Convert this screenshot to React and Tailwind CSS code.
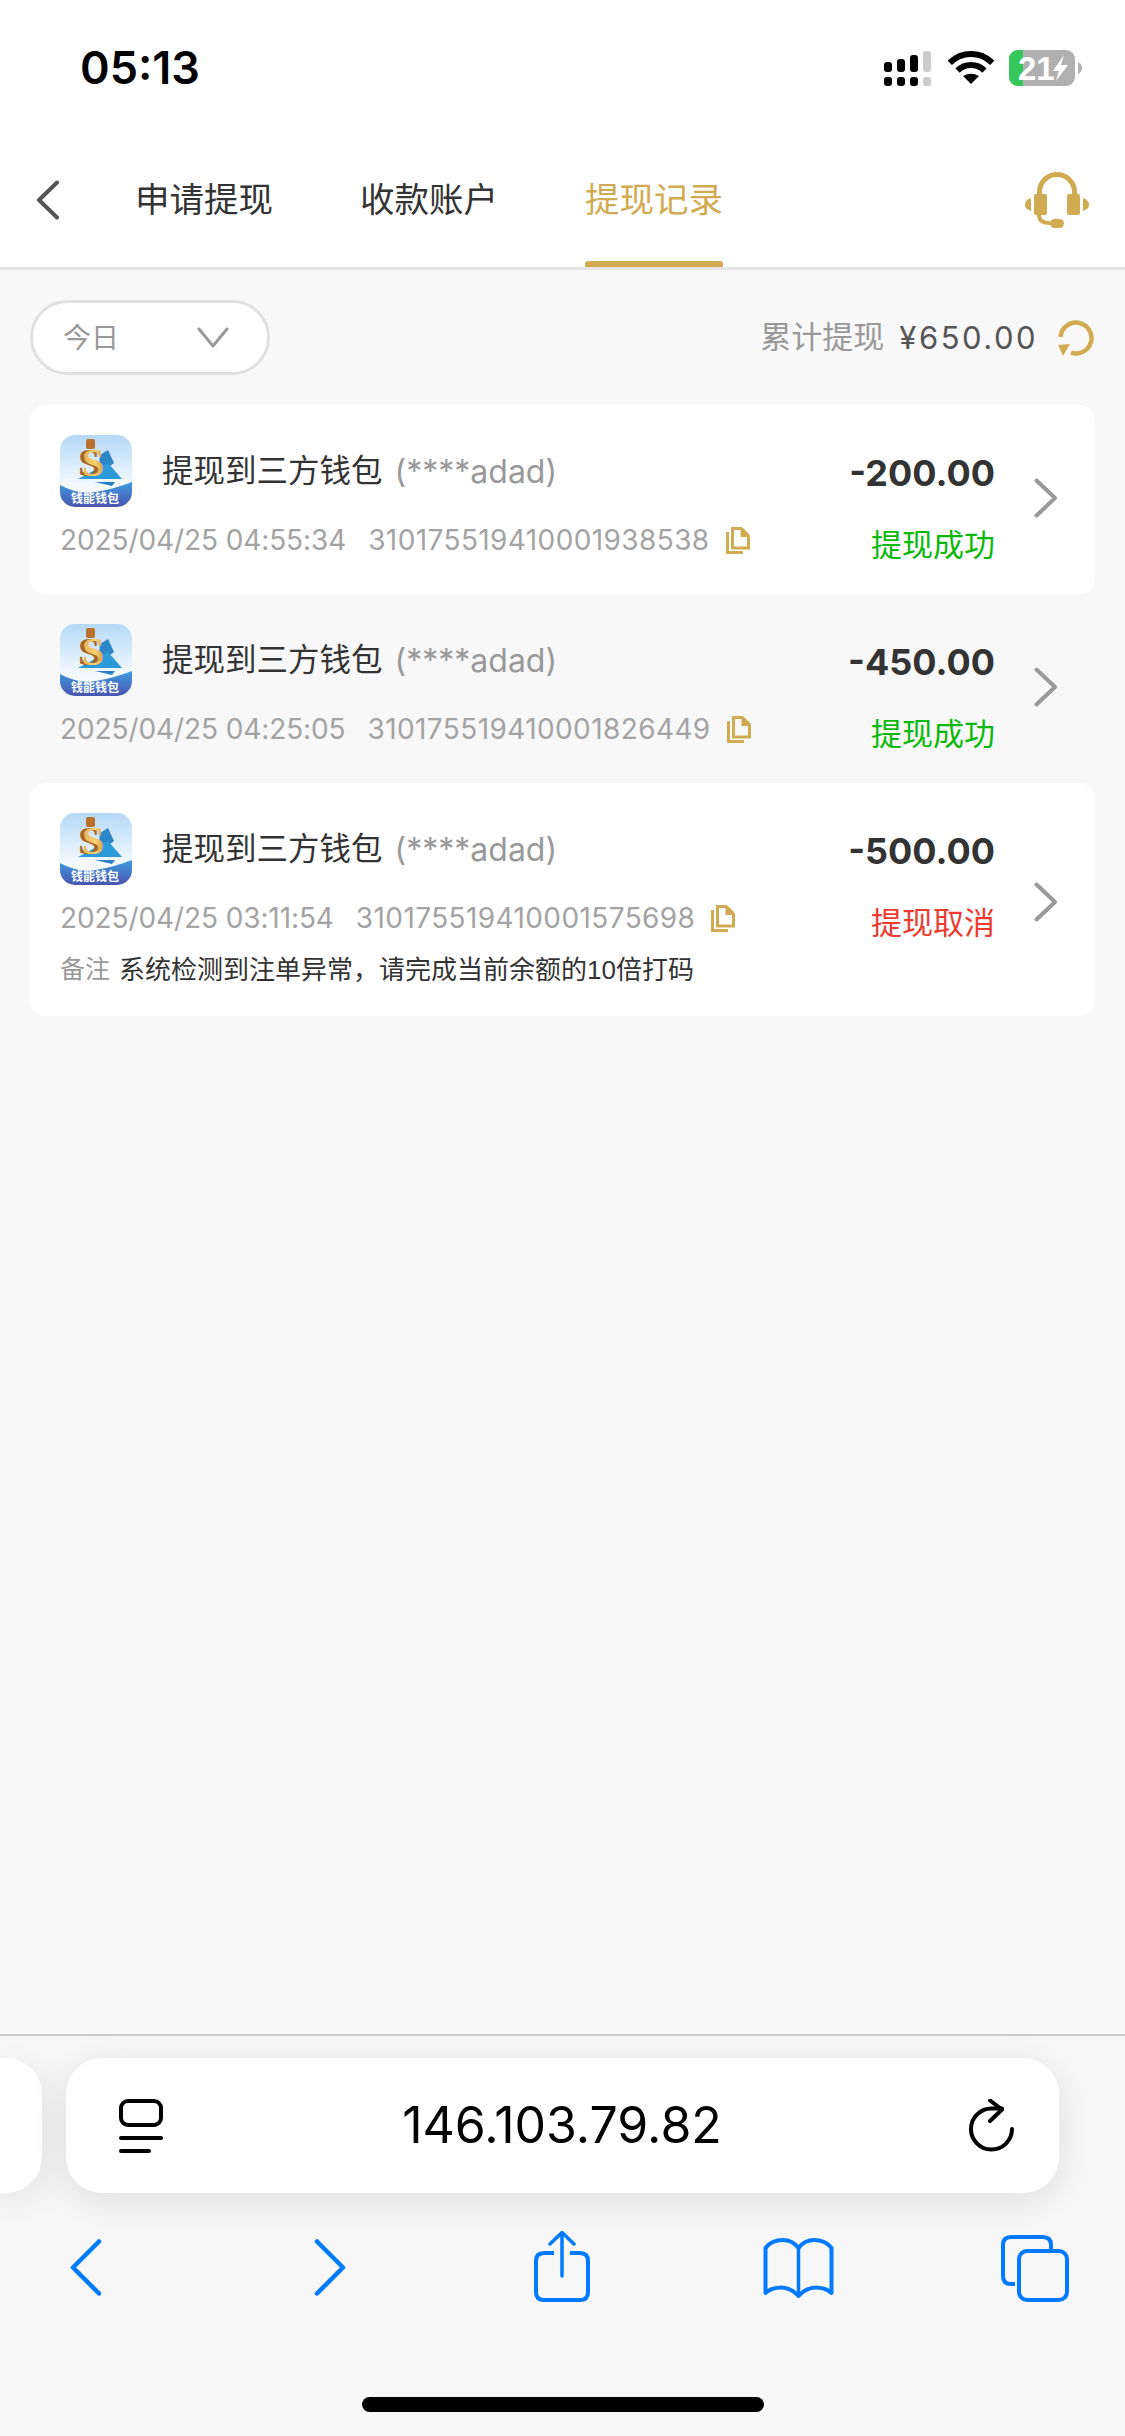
const CJK = "font-['Liberation_Sans','Noto_Sans_CJK_SC',sans-serif]"

const records = [
  { amount: '-200.00', date: '2025/04/25 04:55:34', no: '310175519410001938538', status: '提现成功', color: 'text-[#0cb80c]', white: true },
  { amount: '-450.00', date: '2025/04/25 04:25:05', no: '310175519410001826449', status: '提现成功', color: 'text-[#0cb80c]', white: false },
  { amount: '-500.00', date: '2025/04/25 03:11:54', no: '310175519410001575698', status: '提现取消', color: 'text-[#ee3b30]', white: true, note: '系统检测到注单异常，请完成当前余额的10倍打码' },
]

function WalletLogo({ id }) {
  return (
    <svg width="72" height="72" viewBox="0 0 72 72" className="shrink-0">
      <defs>
        <linearGradient id={`sky${id}`} x1="0" y1="0" x2="0" y2="1">
          <stop offset="0" stopColor="#b5d9f7" />
          <stop offset="0.7" stopColor="#f4f9fe" />
        </linearGradient>
        <linearGradient id={`sea${id}`} x1="0" y1="0" x2="0" y2="1">
          <stop offset="0" stopColor="#3f9be0" />
          <stop offset="1" stopColor="#4a55b0" />
        </linearGradient>
        <linearGradient id={`gold${id}`} x1="0" y1="0" x2="1" y2="0">
          <stop offset="0" stopColor="#e8b050" />
          <stop offset="0.6" stopColor="#f6d070" />
          <stop offset="1" stopColor="#d89a3a" />
        </linearGradient>
        <clipPath id={`clip${id}`}>
          <rect width="72" height="72" rx="15" />
        </clipPath>
      </defs>
      <g clipPath={`url(#clip${id})`}>
        <rect width="72" height="72" fill={`url(#sky${id})`} />
        <path d="M40 20 L48 15 L54 28 L38 40 Z" fill="#2b86c8" />
        <path d="M18 44 L48 28 L62 44 Z" fill="#2a9ad8" />
        <path d="M35 47 L55 47 L52 51 Z" fill="#2a7fc4" />
        <rect x="26" y="4" width="9" height="10" rx="2" fill="#b8702c" />
        <text x="29" y="41" textAnchor="middle" fontSize="40" fontWeight="700" fill="#a8642a" fontFamily="Liberation Serif, serif">S</text>
        <text x="33" y="41" textAnchor="middle" fontSize="40" fontWeight="700" fill={`url(#gold${id})`} fontFamily="Liberation Serif, serif">S</text>
        <path d="M0 50 Q18 60 36 57 Q54 54 72 47 V72 H0 Z" fill={`url(#sea${id})`} />
        <text x="35" y="68" textAnchor="middle" fontSize="12" fontWeight="700" fill="#ffffff" fontFamily="Noto Sans CJK SC, sans-serif">钱能钱包</text>
      </g>
    </svg>
  )
}

function CopyIcon() {
  return (
    <svg width="24" height="27" viewBox="0 0 24 27" fill="none" className="shrink-0">
      <path d="M1.5 5 V25.5 H17" stroke="#d1ab52" strokeWidth="3" />
      <path d="M6.5 1.5 H15 L22.5 9 V21 H6.5 Z" stroke="#d1ab52" strokeWidth="3" />
      <path d="M14.5 1 H17 L23 7 V10 H14.5 Z" fill="#d1ab52" />
    </svg>
  )
}

function RecordCard({ item, index }) {
  return (
    <div className={`flex items-center rounded-2xl pl-[30px] pr-[37px] ${item.white ? 'bg-white' : ''} ${item.note ? 'pt-[30px] pb-[26px]' : 'pt-[30px] pb-[34px]'}`}>
      <div className="flex-1 min-w-0 self-start">
        <div className="flex items-center h-[72px]">
          <WalletLogo id={index} />
          <span className="ml-[30px] pt-[2px] text-[31.5px] text-[#333]">提现到三方钱包</span>
          <span className="ml-[12px] pt-[2px] font-['Inter',sans-serif] text-[32px] text-[#999]">(****adad)</span>
        </div>
        <div className="flex items-center h-[40px] mt-[13px] font-['Inter',sans-serif] text-[28px] text-[#a3a3a3]">
          <span className="tracking-[-0.1px]">{item.date}</span>
          <span className="ml-[22px] tracking-[0.4px]">{item.no}</span>
          <span className="ml-[16px]"><CopyIcon /></span>
        </div>
        {item.note && (
          <div className="flex items-center h-[40px] mt-3">
            <span className="text-[25px] text-[#999]">备注</span>
            <span className="ml-[9px] text-[26px] text-[#333]">{item.note}</span>
          </div>
        )}
      </div>
      <div className="self-start text-right">
        <div className="flex items-center justify-end h-[72px] pt-[3px] font-['Inter',sans-serif] font-bold text-[36px] text-[#333]">{item.amount}</div>
        <div className={`h-[40px] mt-[13px] leading-[52px] text-[31px] ${item.color}`}>{item.status}</div>
      </div>
      <svg width="24" height="40" viewBox="0 0 24 40" fill="none" className="ml-[39px] shrink-0">
        <path d="M2.5 2.5 L21 20 L2.5 37.5" stroke="#999" strokeWidth="4" strokeLinecap="round" strokeLinejoin="round" />
      </svg>
    </div>
  )
}

function StatusBar() {
  return (
    <div className="flex h-[155px] items-start justify-between bg-white pl-[80px] pr-[43px] pt-[45px]">
      <span className="font-['Inter',sans-serif] font-semibold text-[45px] leading-[46px] text-black">05:13</span>
      <div className="flex items-start pt-[6px]">
        <svg width="47" height="35" viewBox="0 0 47 35">
          <rect x="0" y="26" width="8" height="9" rx="3" />
          <rect x="13" y="26" width="8" height="9" rx="3" />
          <rect x="26" y="26" width="8" height="9" rx="3" />
          <rect x="39" y="26" width="8" height="9" rx="3" fill="#cccccc" />
          <rect x="0" y="11" width="8" height="10" rx="3" />
          <rect x="13" y="8" width="8" height="13" rx="3" />
          <rect x="26" y="4" width="8" height="17" rx="3" />
          <rect x="39" y="0" width="8" height="21" rx="3" fill="#cccccc" />
        </svg>
        <svg width="46" height="33" viewBox="0 0 46 33" className="ml-[17px]">
          <path d="M1.8 11.8 A30 30 0 0 1 44.2 11.8" fill="none" stroke="#000" strokeWidth="6" />
          <path d="M9.6 19.6 A19 19 0 0 1 36.4 19.6" fill="none" stroke="#000" strokeWidth="6" />
          <path d="M23 33 L15 25 Q23 20.5 31 25 Z" />
        </svg>
        <svg width="73" height="36" viewBox="0 0 73 36" className="ml-[15px] -mt-px">
          <defs>
            <clipPath id="batteryClip">
              <rect width="66" height="36" rx="9" />
            </clipPath>
          </defs>
          <g clipPath="url(#batteryClip)">
            <rect width="66" height="36" fill="#b0b0b0" />
            <rect width="14" height="36" fill="#34c759" />
          </g>
          <path d="M69 12 Q73 14 73 18 Q73 22 69 24 Z" fill="#b0b0b0" />
          <text x="9" y="30" fontSize="33" fontWeight="700" fill="#fff" fontFamily="Liberation Sans, sans-serif">21</text>
          <path d="M55 5 L44 21 H50 L47 31 L59 15 H52 Z" fill="#fff" />
        </svg>
      </div>
    </div>
  )
}

function NavBar() {
  return (
    <div className="flex h-[115px] items-start border-b-[3px] border-[#e5e5e5] bg-white">
      <svg width="24" height="40" viewBox="0 0 24 40" fill="none" className="ml-[36px] mt-[25px] shrink-0">
        <path d="M21 2.5 L3 20 L21 37.5" stroke="#555" strokeWidth="4" strokeLinecap="round" strokeLinejoin="round" />
      </svg>
      <div className="ml-[75px] mt-[21px] text-[34.5px] leading-[48px] text-[#333]">申请提现</div>
      <div className="ml-[87px] mt-[21px] text-[34.5px] leading-[48px] text-[#333]">收款账户</div>
      <div className="ml-[87px] flex h-full w-[138px] flex-col justify-between pt-[21px]">
        <div className="text-[34.5px] leading-[48px] whitespace-nowrap text-[#d1ab52]">提现记录</div>
        <div className="h-[6px] rounded-t-[3px] bg-[#d1ab52]" />
      </div>
      <svg width="64" height="56" viewBox="0 0 64 56" className="ml-auto mr-[36px] mt-[17px] shrink-0" fill="#d1ab52">
        <path d="M14.5 26 V20 a17.5 17.5 0 0 1 35 0 V26" fill="none" stroke="#d1ab52" strokeWidth="5" />
        <rect x="9" y="22" width="13" height="21" rx="2" />
        <rect x="42" y="22" width="13" height="21" rx="2" />
        <path d="M6 26 V39 Q0 37 0 32.5 Q0 28 6 26 Z" />
        <path d="M58 26 V39 Q64 37 64 32.5 Q64 28 58 26 Z" />
        <path d="M14 43 Q14 51 25 51" fill="none" stroke="#d1ab52" strokeWidth="4" />
        <rect x="25" y="47" width="14" height="9" rx="4.5" />
      </svg>
    </div>
  )
}

function FilterRow() {
  return (
    <div className="flex items-center justify-between pl-[30px] pr-[30px] pt-[30px] pb-[30px]">
      <div className="flex h-[75px] w-[240px] items-center justify-between rounded-full border-[3px] border-[#e0e0e0] bg-white pl-[30px] pr-[38px]">
        <span className="pt-[2px] text-[28px] text-[#999]">今日</span>
        <svg width="32" height="21" viewBox="0 0 32 21" fill="none">
          <path d="M2 2 L16 19 L30 2" stroke="#999" strokeWidth="3" strokeLinecap="round" strokeLinejoin="round" />
        </svg>
      </div>
      <div className="flex items-center">
        <span className="pt-[2px] text-[31px] text-[#999]">累计提现</span>
        <span className="ml-[15px] pt-[2px] font-['Inter',sans-serif] text-[31px] tracking-[2.5px] text-[#555]">¥650.00</span>
        <svg width="38" height="38" viewBox="0 0 38 38" fill="none" className="ml-[19px]">
          <path d="M3.5 18 A15.5 15.5 0 1 1 14 33.7" stroke="#d1ab52" strokeWidth="4.5" />
          <path d="M1 26 L13 25 L6 37 Z" fill="#d1ab52" />
        </svg>
      </div>
    </div>
  )
}

function SafariBar() {
  return (
    <div className="mt-auto h-[402px] border-t-2 border-[#c8c8c8] bg-[#f7f7f7]">
      <div className="flex pt-[22px]">
        <div className="h-[135px] w-[42px] shrink-0 rounded-r-[36px] bg-white shadow-[0_8px_40px_rgba(0,0,0,0.1)]" />
        <div className="ml-[24px] flex h-[135px] w-[993px] shrink-0 items-center rounded-[36px] bg-white pl-[52px] pr-[44px] shadow-[0_8px_40px_rgba(0,0,0,0.1)]">
          <svg width="46" height="54" viewBox="0 0 46 54" fill="none">
            <rect x="3" y="2" width="40" height="24" rx="7" stroke="#000" strokeWidth="4" />
            <path d="M3 39 H43 M3 52 H31" stroke="#000" strokeWidth="4" strokeLinecap="round" />
          </svg>
          <span className="flex-1 pr-[9px] text-center font-['Inter',sans-serif] text-[50px] text-black">146.103.79.82</span>
          <svg width="46" height="54" viewBox="0 0 46 54" fill="none">
            <path d="M43 30 A20.5 20.5 0 1 1 23 9.5 H33" stroke="#000" strokeWidth="4" strokeLinecap="round" />
            <path d="M21 1.5 L33 10.5 L21 22" stroke="#000" strokeWidth="4" strokeLinecap="round" strokeLinejoin="round" />
          </svg>
        </div>
      </div>
      <div className="flex items-start pt-[37px]">
        <svg width="32" height="57" viewBox="0 0 32 57" fill="none" className="ml-[70px] mt-[9px]">
          <path d="M29 2.5 L3 28.5 L29 54.5" stroke="#007aff" strokeWidth="4.5" strokeLinecap="round" strokeLinejoin="round" />
        </svg>
        <svg width="32" height="57" viewBox="0 0 32 57" fill="none" className="ml-[212px] mt-[9px]">
          <path d="M3 2.5 L29 28.5 L3 54.5" stroke="#007aff" strokeWidth="4.5" strokeLinecap="round" strokeLinejoin="round" />
        </svg>
        <svg width="56" height="72" viewBox="0 0 56 72" fill="none" className="ml-[188px] mt-px">
          <path d="M20 22 H10 Q2 22 2 30 V61 Q2 69 10 69 H46 Q54 69 54 61 V30 Q54 22 46 22 H36" stroke="#007aff" strokeWidth="4" />
          <path d="M28 3 V45" stroke="#007aff" strokeWidth="3.5" strokeLinecap="round" />
          <path d="M16 13 L28 1.5 L40 13" stroke="#007aff" strokeWidth="3.5" strokeLinecap="round" strokeLinejoin="round" />
        </svg>
        <svg width="71" height="60" viewBox="0 0 71 60" fill="none" className="ml-[173px] mt-[8px]">
          <path d="M35.5 10 C31 4 25 2 20 2 C13 2 7 4 2.5 10 V55 C7 51 13 49.5 18 49.5 C25 49.5 31 53 35.5 58 C40 53 46 49.5 53 49.5 C58 49.5 64 51 68.5 55 V10 C64 4 58 2 51 2 C46 2 40 4 35.5 10 Z" stroke="#007aff" strokeWidth="4" strokeLinejoin="round" />
          <path d="M35.5 10 V58" stroke="#007aff" strokeWidth="3.5" />
        </svg>
        <svg width="68" height="67" viewBox="0 0 68 67" fill="none" className="ml-[167px] mt-[5px]">
          <path d="M14 49 H10 Q2 49 2 41 V10 Q2 2 10 2 H42 Q50 2 50 10 V14" stroke="#007aff" strokeWidth="4" />
          <rect x="18" y="16" width="48" height="49" rx="8" stroke="#007aff" strokeWidth="4" />
        </svg>
      </div>
      <div className="mx-auto mt-[94px] h-[15px] w-[402px] rounded-full bg-black" />
    </div>
  )
}

export default function App() {
  return (
    <div className={`flex h-[2436px] w-[1125px] flex-col overflow-hidden bg-[#f8f8f8] ${CJK}`}>
      <StatusBar />
      <NavBar />
      <FilterRow />
      <div className="px-[30px]">
        {records.map((item, i) => (
          <RecordCard key={item.no} item={item} index={i} />
        ))}
      </div>
      <SafariBar />
    </div>
  )
}
